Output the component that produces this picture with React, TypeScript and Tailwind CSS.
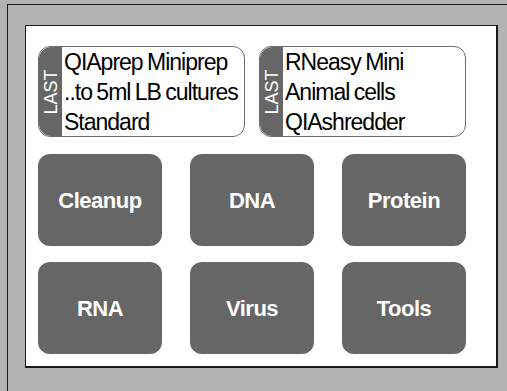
const recent = [
  { lines: ["QIAprep Miniprep", "..to 5ml LB cultures", "Standard"] },
  { lines: ["RNeasy Mini", "Animal cells", "QIAshredder"] },
];

const kits = ["Cleanup", "DNA", "Protein", "RNA", "Virus", "Tools"];

function LastCard({ lines }: { lines: string[] }) {
  return (
    <div className="flex h-[91px] overflow-hidden rounded-[12px] border border-[#6e6e6e] bg-white">
      <div className="flex w-[23px] shrink-0 items-center justify-center rounded-l-[12px] bg-[#666666]">
        <span className="-rotate-90 text-[18px] leading-none text-white">LAST</span>
      </div>
      <div className="flex flex-col justify-center pl-[2px] text-[23px] leading-[30px] tracking-[-1px] text-black [word-spacing:-1px]">
        {lines.map((l) => (
          <div key={l} className="whitespace-nowrap">
            {l}
          </div>
        ))}
      </div>
    </div>
  );
}

export default function App() {
  return (
    <div
      className="h-[391px] w-[507px] overflow-hidden bg-[#b3b3b3]"
      style={{ fontFamily: '"Liberation Sans", Arial, sans-serif' }}
    >
      <div className="ml-[7px] mt-[4px] h-[400px] border-l border-t border-[#1a1a1a] pl-[17px] pt-[20px]">
        <div className="h-[343px] w-[473px] border-b-2 border-l border-r-2 border-t border-[#1a1a1a] bg-white pl-[12px] pt-[20px]">
          <div className="grid w-[428px] grid-cols-[207px_207px] gap-x-[14px]">
            {recent.map((r, i) => (
              <LastCard key={i} lines={r.lines} />
            ))}
          </div>
          <div className="mt-[17px] grid w-[430px] grid-cols-[124px_124px_124px] gap-x-[28px] gap-y-[16px]">
            {kits.map((k) => (
              <div
                key={k}
                className="flex h-[92px] items-center justify-center rounded-[12px] bg-[#666666] text-[22px] font-bold tracking-[-0.5px] text-white"
              >
                {k}
              </div>
            ))}
          </div>
        </div>
      </div>
    </div>
  );
}
